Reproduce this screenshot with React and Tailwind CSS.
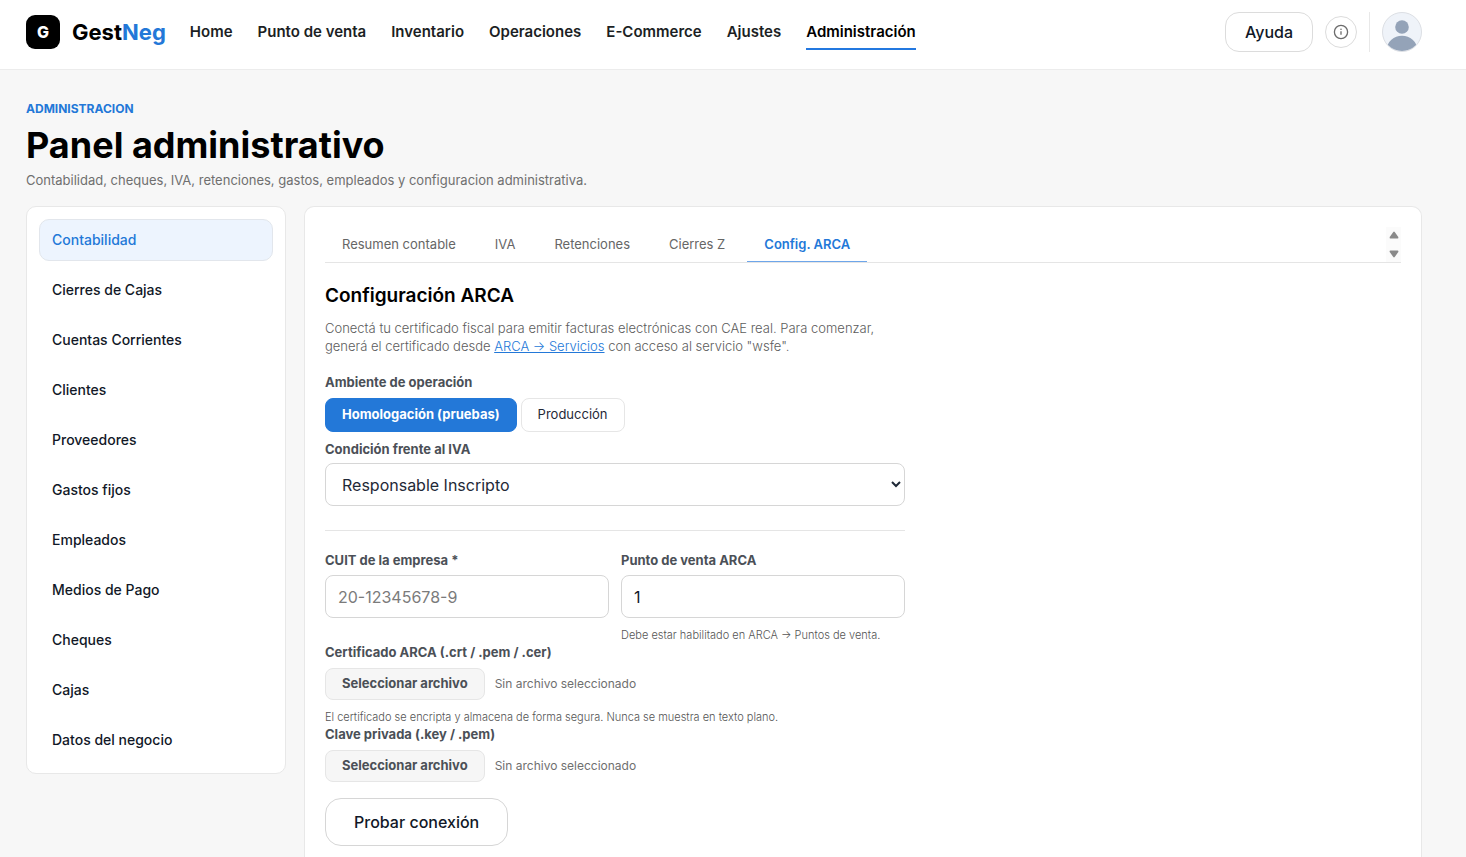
import React, { useRef, useState } from "react";

const navItems = ["Home", "Punto de venta", "Inventario", "Operaciones", "E-Commerce", "Ajustes", "Administración"];

const sections = [
  "Contabilidad",
  "Cierres de Cajas",
  "Cuentas Corrientes",
  "Clientes",
  "Proveedores",
  "Gastos fijos",
  "Empleados",
  "Medios de Pago",
  "Cheques",
  "Cajas",
  "Datos del negocio",
];

const tabs = ["Resumen contable", "IVA", "Retenciones", "Cierres Z", "Config. ARCA"];

const TopBar = () => (
  <header className="flex items-start justify-between border-b border-[#ececec] bg-white pt-3 pr-11 pb-[17px] pl-[26px]">
    <div className="flex h-10 items-center gap-6">
      <a href="#" className="flex items-center gap-3">
        <span className="flex size-[34px] items-center justify-center rounded-[9px] bg-black text-base font-extrabold text-white">G</span>
        <span className="text-[22px] leading-7 font-bold text-black">
          Gest<span className="text-[#2378d8]">Neg</span>
        </span>
      </a>
      <nav className="flex items-center gap-[25px]">
        {navItems.map((item) => (
          <a
            key={item}
            href="#"
            className={
              item === "Administración"
                ? "border-b-2 border-[#2378e0] pt-[6px] pb-1 text-[15px] leading-6 font-semibold text-black"
                : "border-b-2 border-transparent pt-[6px] pb-1 text-[15px] leading-6 font-semibold text-[#1c1f24]"
            }
          >
            {item}
          </a>
        ))}
      </nav>
    </div>
    <div className="flex items-center gap-3">
      <button type="button" className="h-10 rounded-[14px] border border-[#dcdcdc] bg-white px-[19px] text-base font-medium text-[#111827]">
        Ayuda
      </button>
      <button type="button" aria-label="Información" className="flex size-8 items-center justify-center rounded-full border border-[#dcdcdc] bg-white text-[#6b6b6b]">
        <svg width="16" height="16" viewBox="0 0 16 16" fill="none" stroke="currentColor">
          <circle cx="8" cy="8" r="6.6" strokeWidth="1.3" />
          <path d="M8 7.2v3.6" strokeWidth="1.3" />
          <circle cx="8" cy="5.3" r="0.8" fill="currentColor" stroke="none" />
        </svg>
      </button>
      <div className="h-10 w-px bg-[#e8e8e8]" />
      <button type="button" aria-label="Mi cuenta" className="size-10 overflow-hidden rounded-full border border-[#dcdfe4] bg-[#eff3f9]">
        <svg width="38" height="38" viewBox="0 0 38 38" fill="#94a3b8">
          <circle cx="19" cy="14" r="6.8" />
          <ellipse cx="19" cy="36" rx="15" ry="13.2" />
        </svg>
      </button>
    </div>
  </header>
);

const Sidebar = () => {
  const [active, setActive] = useState("Contabilidad");

  return (
    <aside className="flex w-[260px] shrink-0 flex-col gap-2 self-start rounded-[10px] border border-[#e8e8e8] bg-white p-3">
      {sections.map((section) => (
        <button
          key={section}
          type="button"
          onClick={() => setActive(section)}
          className={
            active === section
              ? "h-[42px] rounded-[10px] border border-[#e2e6ec] bg-[#edf4fe] px-3 text-left text-sm font-medium text-[#2378d8]"
              : "h-[42px] rounded-[10px] border border-transparent px-3 text-left text-sm font-medium text-[#111827]"
          }
        >
          {section}
        </button>
      ))}
    </aside>
  );
};

const Tabs = () => {
  const [active, setActive] = useState("Config. ARCA");

  return (
    <div className="flex h-9 justify-between border-b border-[#e5e5e5]">
      <div role="tablist" className="flex gap-[5px]">
        {tabs.map((tab) => (
          <button
            key={tab}
            type="button"
            role="tab"
            aria-selected={active === tab}
            onClick={() => setActive(tab)}
            className={
              active === tab
                ? "border-b border-[#6ea6ea] px-[17px] pt-[2px] text-[13px] font-semibold text-[#2378d8]"
                : "border-b border-transparent px-[17px] pt-[2px] text-[13px] text-[#666666]"
            }
          >
            {tab}
          </button>
        ))}
      </div>
      <div className="flex w-[15px] flex-col justify-between bg-[#fbfbfb] pt-1 pb-1 text-[#8a8a8a]">
        <button type="button" aria-label="Subir" className="flex justify-center">
          <svg width="10" height="8" viewBox="0 0 10 8" fill="currentColor">
            <path d="M4.3 1 Q5 0.2 5.7 1 L9.3 6 Q9.7 7.5 8.6 7.5 H1.4 Q0.3 7.5 0.7 6 Z" />
          </svg>
        </button>
        <button type="button" aria-label="Bajar" className="flex justify-center">
          <svg width="10" height="8" viewBox="0 0 10 8" fill="currentColor">
            <path d="M4.3 7 Q5 7.8 5.7 7 L9.3 2 Q9.7 0.5 8.6 0.5 H1.4 Q0.3 0.5 0.7 2 Z" />
          </svg>
        </button>
      </div>
    </div>
  );
};

const FilePicker = ({ id, label, accept, help }) => {
  const inputRef = useRef(null);
  const [fileName, setFileName] = useState("");

  return (
    <div>
      <label htmlFor={id} className="mb-[7px] block text-[13px] leading-[18px] font-bold text-[#4b5057]">{label}</label>
      <input
        ref={inputRef}
        id={id}
        type="file"
        accept={accept}
        className="hidden"
        onChange={(e) => setFileName(e.target.files[0] ? e.target.files[0].name : "")}
      />
      <div className="flex items-center gap-[10px]">
        <button
          type="button"
          onClick={() => inputRef.current.click()}
          className="h-8 rounded-lg border border-[#e6e6e6] bg-[#f6f6f6] px-4 text-[13px] font-bold text-[#4b5057]"
        >
          Seleccionar archivo
        </button>
        <span className="text-xs text-[#6f6f6f]">{fileName || "Sin archivo seleccionado"}</span>
      </div>
      {help && <p className="mt-[9px] text-[11px] leading-4 font-light text-[#555555]">{help}</p>}
    </div>
  );
};

const ArcaForm = () => {
  const [mode, setMode] = useState("homologacion");
  const on = "h-[34px] rounded-lg border border-[#2378d8] bg-[#2378d8] px-4 text-[13px] font-bold text-white";
  const off = "h-[34px] rounded-lg border border-[#e6e6e6] bg-white px-4 text-[13px] text-[#1f2937]";

  return (
    <form className="max-w-[580px]" onSubmit={(e) => e.preventDefault()}>
      <h2 className="mt-[19px] text-[19px] leading-7 font-semibold text-black">Configuración ARCA</h2>
      <p className="mt-[9px] text-[13px] leading-[18px] font-light text-[#5c5c5c]">
        Conectá tu certificado fiscal para emitir facturas electrónicas con CAE real. Para comenzar, generá el certificado desde{" "}
        <a href="#" className="text-[#2378d8] underline">ARCA → Servicios</a> con acceso al servicio "wsfe".
      </p>

      <fieldset className="mt-[18px]">
        <legend className="mb-[7px] text-[13px] leading-[18px] font-bold text-[#4b5057]">Ambiente de operación</legend>
        <div className="flex gap-1">
          <button type="button" onClick={() => setMode("homologacion")} className={mode === "homologacion" ? on : off}>
            Homologación (pruebas)
          </button>
          <button type="button" onClick={() => setMode("produccion")} className={mode === "produccion" ? on : off}>
            Producción
          </button>
        </div>
      </fieldset>

      <label htmlFor="condicion" className="mt-2 mb-[5px] block text-[13px] leading-[18px] font-bold text-[#4b5057]">
        Condición frente al IVA
      </label>
      <select id="condicion" className="h-[43px] w-full rounded-lg border border-[#d6d6d6] bg-white px-3 text-base text-[#1f2937]">
        <option>Responsable Inscripto</option>
        <option>Monotributista</option>
        <option>Exento</option>
      </select>

      <hr className="mt-6 border-[#e5e5e5]" />

      <div className="mt-5 grid grid-cols-2 gap-3">
        <div>
          <label htmlFor="cuit" className="mb-[6px] block text-[13px] leading-[18px] font-bold text-[#4b5057]">CUIT de la empresa *</label>
          <input
            id="cuit"
            type="text"
            placeholder="20-12345678-9"
            className="h-[43px] w-full rounded-lg border border-[#d6d6d6] bg-white px-3 text-base text-[#111827] placeholder:text-[#7b7b7b]"
          />
        </div>
        <div>
          <label htmlFor="punto" className="mb-[6px] block text-[13px] leading-[18px] font-bold text-[#4b5057]">Punto de venta ARCA</label>
          <input
            id="punto"
            type="text"
            inputMode="numeric"
            defaultValue="1"
            className="h-[43px] w-full rounded-lg border border-[#d6d6d6] bg-white px-3 text-base text-[#111827]"
          />
          <p className="mt-[9px] text-[11px] leading-4 font-light text-[#555555]">Debe estar habilitado en ARCA → Puntos de venta.</p>
        </div>
      </div>

      <FilePicker
        id="certificado"
        label="Certificado ARCA (.crt / .pem / .cer)"
        accept=".crt,.pem,.cer"
        help="El certificado se encripta y almacena de forma segura. Nunca se muestra en texto plano."
      />
      <FilePicker id="clave" label="Clave privada (.key / .pem)" accept=".key,.pem" />

      <button type="submit" className="mt-4 h-12 rounded-2xl border border-[#d6d6d6] bg-white px-7 text-base font-medium text-[#111827]">
        Probar conexión
      </button>
    </form>
  );
};

export default function App() {
  return (
    <div className="flex min-h-screen flex-col bg-[#f7f7f7] font-['Inter',sans-serif]">
      <TopBar />
      <main className="flex flex-1 flex-col pt-[30px] pr-11 pl-[26px]">
        <p className="text-xs leading-[18px] font-bold text-[#2378d8] uppercase">Administracion</p>
        <h1 className="mt-1 text-[36px] leading-[46px] font-bold text-black">Panel administrativo</h1>
        <p className="mt-[2px] text-[13px] leading-5 text-[#6f6f6f]">
          Contabilidad, cheques, IVA, retenciones, gastos, empleados y configuracion administrativa.
        </p>
        <div className="mt-4 flex flex-1 gap-[18px]">
          <Sidebar />
          <section className="min-w-0 flex-1 rounded-t-[10px] border border-b-0 border-[#e8e8e8] bg-white px-5 pt-5">
            <Tabs />
            <ArcaForm />
          </section>
        </div>
      </main>
    </div>
  );
}
